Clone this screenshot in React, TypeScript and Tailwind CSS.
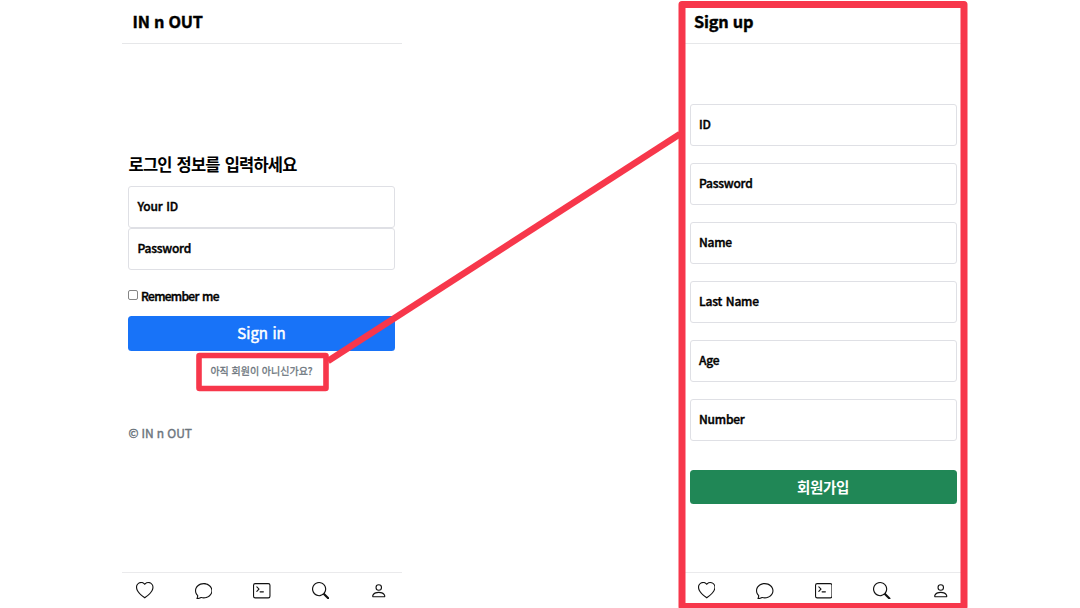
import type { ReactNode } from "react";
import { BsChat, BsHeart, BsPerson, BsSearch, BsTerminal } from "react-icons/bs";

const navIcons = [BsHeart, BsChat, BsTerminal, BsSearch, BsPerson];

function Field({ label }: { label: string }) {
  return (
    <div className="flex h-[42px] w-full items-center rounded-[3px] border border-[#dfe0e5] px-[8.5px] text-[12px] font-medium tracking-[-0.22px] [word-spacing:1.4px] [-webkit-text-stroke:0.4px_#000]">
      <span className="-mt-[2px]">{label}</span>
    </div>
  );
}

function Phone({ title, children }: { title: string; children: ReactNode }) {
  return (
    <section className="flex h-[608px] w-[280px] shrink-0 flex-col">
      <header className="flex h-11 shrink-0 items-center border-b border-[#e6e7e9] px-[10.5px] pb-px text-[16.3px] font-bold tracking-[-0.2px] [word-spacing:0.8px] [-webkit-text-stroke:0.4px_#000]">
        {title}
      </header>
      <main className="flex flex-1 flex-col pr-[7px] pl-[6px]">{children}</main>
      <nav className="flex h-9 shrink-0 items-center justify-between border-t border-[#eaeaec] pr-[14.5px] pl-[14px] text-[#111]">
        {navIcons.map((Icon, i) => (
          <Icon key={i} size={17.5} />
        ))}
      </nav>
    </section>
  );
}

export default function App() {
  return (
    <div className="relative flex h-[608px] w-[1080px] gap-[281.5px] overflow-hidden bg-white pl-[122px] font-['Noto_Sans_CJK_KR',sans-serif] text-black">
      <Phone title="IN n OUT">
        <h1 className="mt-[108px] flex h-[24px] items-center pl-[0.5px] text-[16.5px] font-bold tracking-[-0.8px] whitespace-nowrap [word-spacing:2px]">
          <span>로그인 정보를 입력하세요</span>
        </h1>
        <div className="mt-[10px]">
          <Field label="Your ID" />
          <Field label="Password" />
        </div>
        <label className="mt-[17px] flex h-[17px] items-center gap-[3px] text-[12px] font-medium tracking-[-0.7px] [word-spacing:1.5px] [-webkit-text-stroke:0.4px_#000]">
          <input type="checkbox" className="-mt-[2px] size-[10px] appearance-none rounded-[2px] border border-[#858585] bg-white" />
          <span>Remember me</span>
        </label>
        <button className="mt-[12px] flex h-[35px] w-full items-center justify-center rounded-[3.5px] bg-[#1873f8] text-[15px] text-white [word-spacing:1px] [-webkit-text-stroke:0.5px_#fff]">
          <span>Sign in</span>
        </button>
        <p className="mt-[10px] flex h-[18px] items-center justify-center text-[10px] text-[#6c757d] [word-spacing:0.5px] [-webkit-text-stroke:0.3px_#6c757d]">
          <span>아직 회원이 아니신가요?</span>
        </p>
        <p className="mt-[45px] flex h-[18px] items-center pl-[0.5px] text-[12px] text-[#6c757d] [word-spacing:0.4px] [-webkit-text-stroke:0.4px_#6c757d]">
          <span>© IN n OUT</span>
        </p>
      </Phone>
      <Phone title="Sign up">
        <div className="mt-[60px] flex flex-col gap-[17px]">
          {["ID", "Password", "Name", "Last Name", "Age", "Number"].map((label) => (
            <Field key={label} label={label} />
          ))}
        </div>
        <button className="mt-[28.5px] flex h-[34.5px] w-full items-center justify-center rounded-[3.5px] bg-[#208756] text-[14.5px] font-bold tracking-[-0.3px] text-white">
          <span>회원가입</span>
        </button>
      </Phone>
      <svg className="pointer-events-none absolute inset-0" width="1080" height="608" fill="none" stroke="#f7374b">
        <rect x="199" y="355.5" width="127" height="33" rx="0.5" strokeWidth="5.6" strokeLinejoin="round" />
        <path d="M328 361 680 134" strokeWidth="6.5" />
        <rect x="682" y="4.6" width="282" height="602" strokeWidth="7" strokeLinejoin="round" />
      </svg>
    </div>
  );
}
